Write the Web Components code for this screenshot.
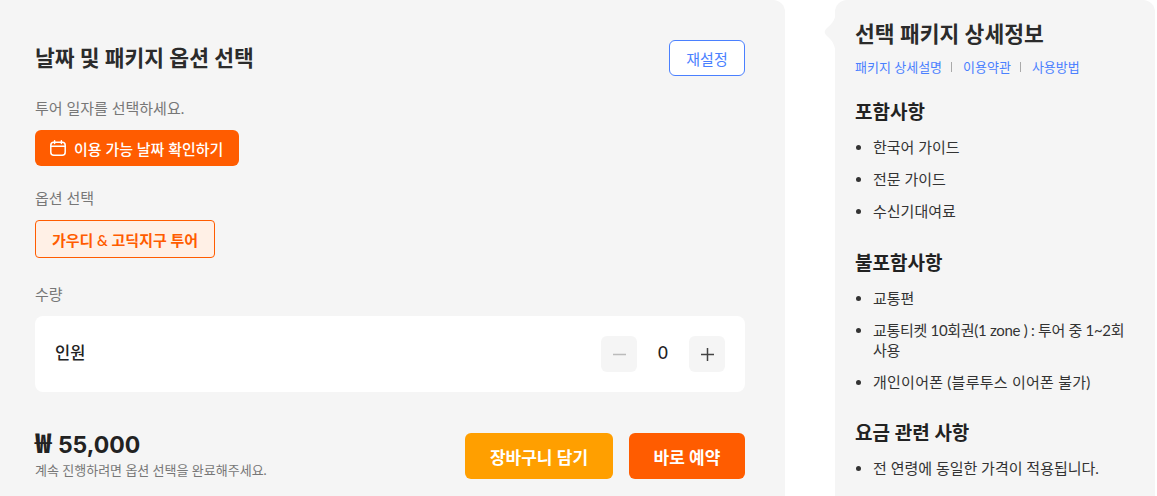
<!DOCTYPE html>
<html lang="ko">
<head>
<meta charset="utf-8">
<title>패키지 옵션</title>
<style>
  html, body { margin: 0; height: 100%; overflow: hidden; background: #fff; }
  body { font-family: Lato, "Noto Sans CJK KR", sans-serif; color: #222; }
  booking-page { height: 496px; }
</style>
</head>
<body>
<booking-page>
  <option-panel></option-panel>
  <detail-panel>
    <info-section title="포함사항">
      <li>한국어 가이드</li>
      <li>전문 가이드</li>
      <li>수신기대여료</li>
    </info-section>
    <info-section title="불포함사항">
      <li>교통편</li>
      <li style="letter-spacing: -0.3px">교통티켓 10회권(1 zone ) : 투어 중 1~2회 사용</li>
      <li style="letter-spacing: 0.25px">개인이어폰 (블루투스 이어폰 불가)</li>
    </info-section>
    <info-section title="요금 관련 사항">
      <li>전 연령에 동일한 가격이 적용됩니다.</li>
    </info-section>
  </detail-panel>
</booking-page>

<script>
class BookingPage extends HTMLElement {
    constructor() {
        super();
        this.attachShadow({ mode: 'open' });
        this.shadowRoot.innerHTML = `
        <style>
        :host { display: flex; gap: 50px; width: 1155px; overflow: hidden; }
        </style>
        <slot></slot>
    `;
    }
}

class OptionPanel extends HTMLElement {
    constructor() {
        super();
        this.attachShadow({ mode: 'open' });
        this.shadowRoot.innerHTML = `
        <style>
        :host {
            display: block;
            box-sizing: border-box;
            flex: 0 0 785px;
            height: 496px;
            padding: 40px 40px 0 35px;
            background: #f5f5f5;
            border-top-right-radius: 12px;
        }
        .head { display: flex; justify-content: space-between; align-items: center; height: 36px; }
        h2 { margin: 0; font-size: 21.5px; font-weight: 700; line-height: 34px; color: #2b2b2b; }
        .reset {
            box-sizing: border-box;
            width: 76px;
            height: 36px;
            border: 1px solid #4a80ff;
            border-radius: 6px;
            background: #fff;
            color: #4a80ff;
            font: inherit;
            font-size: 15px;
            padding: 0;
        }
        .label { font-size: 15px; line-height: 20px; color: #777; }
        .date-label { margin-top: 22px; }
        .date {
            display: inline-flex;
            align-items: center;
            gap: 8px;
            box-sizing: border-box;
            width: 204px;
            height: 36px;
            margin-top: 12px;
            padding: 0 0 0 15px;
            border: 0;
            border-radius: 6px;
            background: #ff5c00;
            color: #fff;
            font: inherit;
            font-size: 15px;
            font-weight: 500;
        }
        .date svg { flex: none; }
        .opt-label { margin-top: 22px; }
        .opt {
            display: block;
            box-sizing: border-box;
            width: 180px;
            height: 38px;
            margin-top: 12px;
            padding: 0;
            border: 1px solid #ff5c00;
            border-radius: 4px;
            background: #fff0e6;
            color: #ff5c00;
            font: inherit;
            font-size: 15px;
            font-weight: 600;
        }
        .qty-label { margin-top: 26px; }
        .card {
            display: flex;
            justify-content: space-between;
            align-items: center;
            box-sizing: border-box;
            height: 76px;
            margin-top: 12px;
            padding: 0 20px;
            background: #fff;
            border-radius: 8px;
        }
        .card b { font-size: 16.5px; font-weight: 500; color: #222; position: relative; top: -2px; }
        .foot { display: flex; justify-content: space-between; align-items: flex-start; margin-top: 41px; }
        .price { font-family: Inter, sans-serif; font-size: 23px; font-weight: 700; line-height: 24px; color: #222; }
        .price span { font-family: "Noto Sans CJK KR", sans-serif; font-size: 27px; font-weight: 900; line-height: 0; margin-right: 1px; }
        .note { font-size: 13px; line-height: 16px; color: #777; margin-top: 5px; }
        .actions { display: flex; gap: 16px; }
        .actions button {
            height: 46px;
            border: 0;
            border-radius: 6px;
            color: #fff;
            font: inherit;
            font-size: 17px;
            font-weight: 600;
            padding: 0;
        }
        .cart { width: 148px; background: #ff9f00; }
        .buy { width: 116px; background: #ff5c00; }
        </style>
        <div class="head">
            <h2>날짜 및 패키지 옵션 선택</h2>
            <button class="reset">재설정</button>
        </div>
        <div class="label date-label">투어 일자를 선택하세요.</div>
        <button class="date">
            <svg width="16" height="16" viewBox="0 0 16 16" fill="none" stroke="#fff" stroke-width="1.5" stroke-linecap="round">
                <rect x="0.8" y="2.2" width="14.4" height="13" rx="3"/>
                <path d="M0.8 6.2h14.4M4.6 0.8v2.6M11.4 0.8v2.6"/>
            </svg>
            <span>이용 가능 날짜 확인하기</span>
        </button>
        <div class="label opt-label">옵션 선택</div>
        <button class="opt">가우디 &amp; 고딕지구 투어</button>
        <div class="label qty-label">수량</div>
        <div class="card">
            <b>인원</b>
            <qty-stepper></qty-stepper>
        </div>
        <div class="foot">
            <div>
                <div class="price"><span>₩</span> 55,000</div>
                <div class="note">계속 진행하려면 옵션 선택을 완료해주세요.</div>
            </div>
            <div class="actions">
                <button class="cart">장바구니 담기</button>
                <button class="buy">바로 예약</button>
            </div>
        </div>
    `;
    }
}

class QtyStepper extends HTMLElement {
    constructor() {
        super();
        this.attachShadow({ mode: 'open' });
        this.shadowRoot.innerHTML = `
        <style>
        :host { display: flex; align-items: center; }
        button {
            display: flex;
            align-items: center;
            justify-content: center;
            width: 36px;
            height: 36px;
            padding: 0;
            border: 0;
            border-radius: 6px;
            background: #f5f5f5;
        }
        span { width: 52px; text-align: center; font-size: 17px; font-weight: 500; color: #222; position: relative; top: -2px; }
        </style>
        <button aria-label="감소">
            <svg width="13" height="13" viewBox="0 0 13 13"><path d="M0 6.500h13" stroke="#bbb" stroke-width="1.5"/></svg>
        </button>
        <span>0</span>
        <button aria-label="증가">
            <svg width="13" height="13" viewBox="0 0 13 13"><path d="M0 6.500h13M6.500 0v13" stroke="#444" stroke-width="1.5"/></svg>
        </button>
    `;
    }
}

class DetailPanel extends HTMLElement {
    constructor() {
        super();
        this.attachShadow({ mode: 'open' });
        this.shadowRoot.innerHTML = `
        <style>
        :host {
            display: block;
            position: relative;
            box-sizing: border-box;
            flex: 0 0 320px;
            height: 496px;
            padding: 20px 20px 0;
            background: #f5f5f5;
            border-radius: 12px 12px 0 0;
        }
        .notch { position: absolute; left: -11px; top: 10px; }
        h2 { margin: 0; font-size: 21.5px; font-weight: 600; line-height: 28px; color: #2b2b2b; }
        nav { display: flex; align-items: center; margin: 11px 0 24px; font-size: 13px; line-height: 16px; color: #4a80ff; }
        nav i { width: 1px; height: 10px; margin: 0 11px 0 9px; background: #aaa; }
        </style>
        <svg class="notch" width="12" height="50" viewBox="0 0 12 50">
            <path d="M12 0C12 8 9 13 3 18C0 20.500 0 23.500 3 26C9 31 12 36 12 50Z" fill="#f5f5f5"/>
        </svg>
        <h2>선택 패키지 상세정보</h2>
        <nav>
            <span>패키지 상세설명</span><i></i><span>이용약관</span><i></i><span>사용방법</span>
        </nav>
        <slot></slot>
    `;
    }
}

class InfoSection extends HTMLElement {
    constructor() {
        super();
        this.attachShadow({ mode: 'open' });
        this.shadowRoot.innerHTML = `
        <style>
        :host { display: block; margin-bottom: 28.5px; }
        h3 { margin: 0 0 12px; font-size: 19px; font-weight: 600; line-height: 26px; color: #222; }
        ul { margin: 0; padding: 0 0 0 18px; font-size: 15px; line-height: 20px; color: #333; }
        ::slotted(li) { margin: 0 0 12px; }
        </style>
        <h3></h3>
        <ul><slot></slot></ul>
    `;
        this.shadowRoot.querySelector('h3').textContent = this.getAttribute('title');
    }
}

customElements.define('booking-page', BookingPage);
customElements.define('option-panel', OptionPanel);
customElements.define('qty-stepper', QtyStepper);
customElements.define('detail-panel', DetailPanel);
customElements.define('info-section', InfoSection);
</script>
</body>
</html>
